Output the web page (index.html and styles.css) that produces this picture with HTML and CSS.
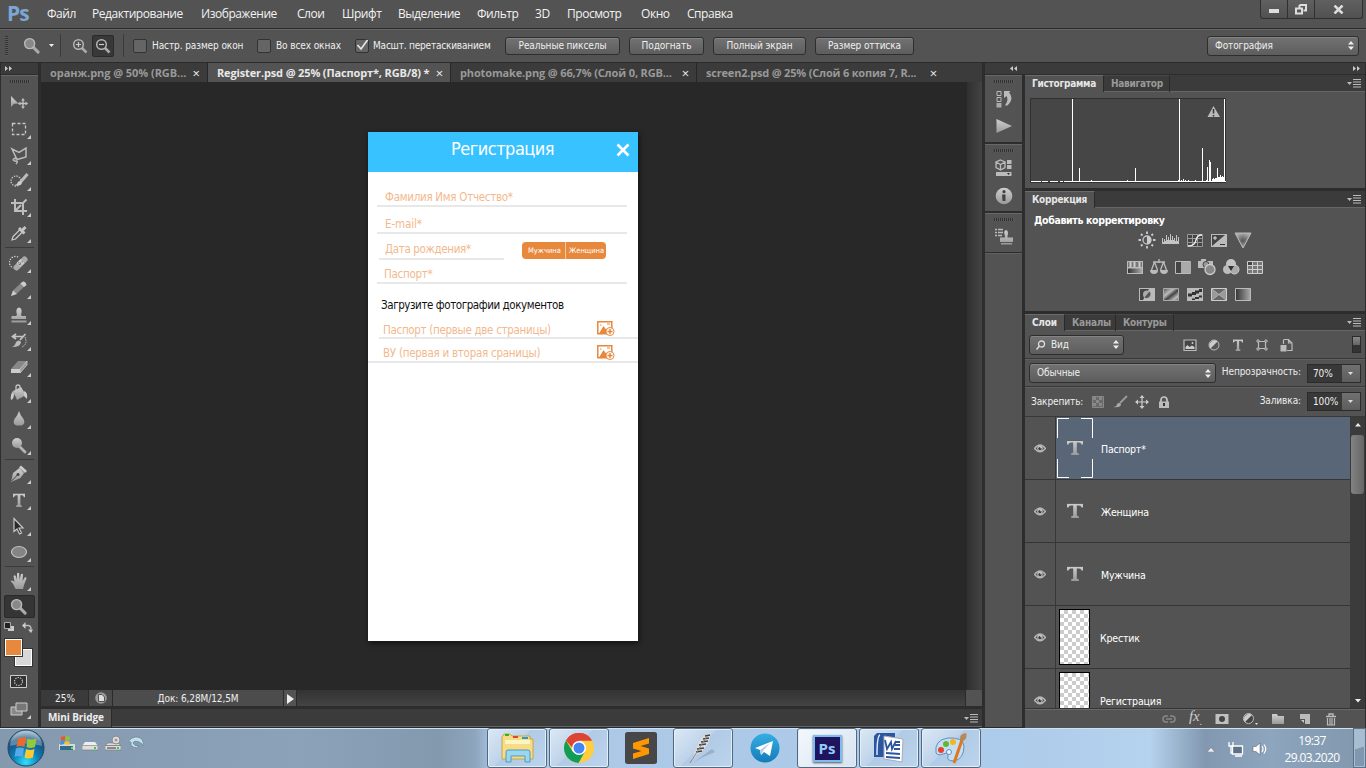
FILE: index.html
```html
<!DOCTYPE html>
<html lang="ru">
<head>
<meta charset="utf-8">
<title>Register.psd</title>
<link rel="stylesheet" href="styles.css">
</head>
<body>
<svg class="defs" width="0" height="0">
  <defs>
    <linearGradient id="metal" x1="0" y1="0" x2="0" y2="1"><stop offset="0" stop-color="#cfcfcf"/><stop offset="1" stop-color="#9a9a9a"/></linearGradient>
    <linearGradient id="fade" x1="0" y1="0" x2="1" y2="0"><stop offset="0" stop-color="#333"/><stop offset="1" stop-color="#aaa"/></linearGradient>
    <linearGradient id="diag" x1="0" y1="0" x2="1" y2="1"><stop offset="0" stop-color="#555"/><stop offset=".35" stop-color="#bbb"/><stop offset=".55" stop-color="#444"/><stop offset=".8" stop-color="#bbb"/><stop offset="1" stop-color="#666"/></linearGradient>
    <linearGradient id="tg" x1="0" y1="0" x2="0" y2="1"><stop offset="0" stop-color="#36aee2"/><stop offset="1" stop-color="#137cba"/></linearGradient>
    <radialGradient id="orb" cx=".5" cy=".9" r=".9"><stop offset="0" stop-color="#2fe0ff"/><stop offset=".4" stop-color="#0d7fb8"/><stop offset=".75" stop-color="#174f7c"/><stop offset="1" stop-color="#a9c4d8"/></radialGradient>
    <radialGradient id="dark"><stop offset="0" stop-color="#555"/><stop offset="1" stop-color="#aaa"/></radialGradient>
    <symbol id="menuic" viewBox="0 0 14 9"><path d="M0 3h5L2.500 6z" fill="#bbb"/><path d="M6 .5h8M6 3h8M6 5.500h8M6 8h8" stroke="#bbb"/></symbol>
    <symbol id="updown" viewBox="0 0 6 9"><path d="M0 3.500L3 0l3 3.500zM0 5.500h6L3 9z" fill="#eee"/></symbol>
    <symbol id="eye" viewBox="0 0 12 9"><path d="M.5 4.500Q6-2.500 11.500 4.500Q6 11 .5 4.500z" fill="#555" stroke="#b5b5b5" stroke-width="1.300"/><circle cx="6" cy="4.300" r="2.700" fill="#c4c4c4"/><circle cx="6" cy="4.600" r="1.700" fill="#383838"/><circle cx="7" cy="3.700" r=".8" fill="#ddd"/></symbol>
    <symbol id="tee" viewBox="0 0 16 15" preserveAspectRatio="none"><path d="M0 0h16v4.500h-1.500Q14 2.500 12 2.500H9.800V12q0 1.300 2 1.300V15H4.200v-1.700q2 0 2-1.300V2.500H4q-2 0-2.500 2H0z" fill="url(#metal)"/><path d="M0 .4h16" stroke="#333" stroke-width=".8"/></symbol>
    <symbol id="lens" viewBox="0 0 18 18"><path d="M10.500 10.500l5.500 5.500" stroke="#aaa" stroke-width="3.200" stroke-linecap="round"/><circle cx="7" cy="7" r="5.300" fill="#888" stroke="#b9b9b9" stroke-width="1.500"/></symbol>
    <symbol id="addpic" viewBox="0 0 18 15"><path d="M.8.8h14v12H.8z" fill="#fff" stroke="#e8883d" stroke-width="1.500"/><path d="M2 12.500L6.500 5l3 4 1.500-1.500V13z" fill="#e8883d"/><path d="M10 3h3M3 4h1.500" stroke="#e8883d" stroke-width="1.200"/><circle cx="13" cy="10.500" r="4" fill="#fff" stroke="#e8883d"/><path d="M13 8v5M10.500 10.500h5" stroke="#e8883d" stroke-width="1.500"/></symbol>
  </defs>
</svg>

<header class="menubar">
  <b class="pslogo">Ps</b>
  <nav class="menu"><span>Файл</span><span>Редактирование</span><span>Изображение</span><span>Слои</span><span>Шрифт</span><span>Выделение</span><span>Фильтр</span><span>3D</span><span>Просмотр</span><span>Окно</span><span>Справка</span></nav>
  <div class="winbtns">
    <span class="wb"><svg width="10" height="4"><path d="M0 0h10v4H0z" fill="#ddd"/></svg></span>
    <span class="wb"><svg width="12" height="11"><path d="M4.500 1h6.500v5.500H8.500M4.500 1v3" fill="none" stroke="#ddd" stroke-width="2"/><path d="M1 4.500h6v5H1z" fill="none" stroke="#ddd" stroke-width="2"/></svg></span>
    <span class="wb wide"><svg width="11" height="9"><path d="M1.500.5l8 8M9.500.5l-8 8" stroke="#ddd" stroke-width="2.500"/></svg></span>
  </div>
</header>

<section class="options">
  <i class="vgrip"></i>
  <svg class="opt-lens" width="17" height="17"><use href="#lens"/></svg>
  <svg class="opt-caret" width="5" height="3"><path d="M0 0h5L2.500 3z" fill="#eee"/></svg>
  <i class="vsep"></i>
  <span class="zoombtn"><svg width="16" height="16"><path d="M10 10l4.500 4.500" stroke="#aaa" stroke-width="2.500"/><circle cx="6.500" cy="6.500" r="4.800" fill="none" stroke="#b5b5b5" stroke-width="1.500"/><path d="M4 6.500h5M6.500 4v5" stroke="#ccc" stroke-width="1.200"/></svg></span>
  <span class="zoombtn on"><svg width="16" height="16"><path d="M10 10l4.500 4.500" stroke="#aaa" stroke-width="2.500"/><circle cx="6.500" cy="6.500" r="4.800" fill="none" stroke="#b5b5b5" stroke-width="1.500"/><path d="M4 6.500h5" stroke="#ccc" stroke-width="1.200"/></svg></span>
  <i class="vsep second"></i>
  <label class="check c1"><i></i>Настр. размер окон</label>
  <label class="check c2"><i></i>Во всех окнах</label>
  <label class="check c3"><i><svg width="14" height="13"><path d="M2.500 6l3.500 4L12.500 1" fill="none" stroke="#e5e5e5" stroke-width="1.700"/></svg></i>Масшт. перетаскиванием</label>
  <span class="btn b1">Реальные пикселы</span><span class="btn b2">Подогнать</span><span class="btn b3">Полный экран</span><span class="btn b4">Размер оттиска</span>
  <span class="select wsel">Фотография<svg width="6" height="9"><use href="#updown"/></svg></span>
</section>

<main class="work">
  <aside class="toolbox">
    <div class="strip"><svg width="8" height="5"><path d="M0 0l3 2.500L0 5zM4 0l3 2.500L4 5z" fill="#ccc"/></svg></div>
    <div class="tools">
      <i class="grip"></i>
      <span class="tool first"><svg width="20" height="20"><path d="M2 3v11l3-3.200 4.500-.3z" fill="url(#metal)"/><path d="M14 6v9M9.500 10.500h9" stroke="#c4c4c4" stroke-width="1.300"/><path d="M14 5l2 2.500h-4zM14 16l2-2.500h-4zM9 10.500l2.500-2v4zM19 10.500l-2.500-2v4z" fill="#bbb"/></svg></span>
      <span class="tool sub"><svg width="20" height="20"><path d="M3.500 4.500h13v11h-13z" fill="none" stroke="#c8c8c8" stroke-width="1.300" stroke-dasharray="3 2"/></svg></span>
      <span class="tool sub"><svg width="20" height="20"><path d="M3 4l7 3.500L17 3v9l-9 2.500zM8 14c-4-2-5 2-2 2s3 1 1 3" fill="none" stroke="#bbb" stroke-width="1.500"/></svg></span>
      <span class="tool sub"><svg width="20" height="20"><circle cx="7" cy="10" r="5" fill="none" stroke="#ccc" stroke-width="1.300" stroke-dasharray="1.300 1.300"/><path d="M18.500 3L12 10.500" stroke="#bbb" stroke-width="3"/><path d="M5 14q3 0 4-3 1.500-2 4 0 0 5-8 3z" fill="#ccc"/></svg></span>
      <span class="tool sub"><svg width="20" height="20"><path d="M6 2v12h12M2 6h12v12M14.500 5.500l3-3M7 13l5-5" fill="none" stroke="#bdbdbd" stroke-width="2"/></svg></span>
      <span class="tool sub"><svg width="20" height="20"><path d="M3 17l1-3.500 7-7 2.500 2.500-7 7z" fill="#555" stroke="#ccc" stroke-width="1.200"/><path d="M10 5l5.500 5.500M13 7.500L16.500 4" stroke="#c4c4c4" stroke-width="3"/></svg></span>
      <hr>
      <span class="tool sub"><svg width="20" height="20"><path d="M9 4a5 5 0 0 0-5 11" fill="none" stroke="#ddd" stroke-width="1.200" stroke-dasharray="1.200 1.400"/><path d="M7.500 14.500l8-8" stroke="#aaa" stroke-width="6" stroke-linecap="round"/><path d="M9.500 12l4-4" stroke="#ccc" stroke-width="5.500"/><path d="M10 11.800l3.500-3.500M9.500 9.500l3 3" stroke="#666" stroke-width="1.200" stroke-dasharray="1 1"/></svg></span>
      <span class="tool sub"><svg width="20" height="20"><path d="M2 17l2-5.500L13 3q3-1 4 3l-9 8.500z" fill="#888"/><path d="M2 17l2-5.500 4 3.500zM11.500 4.500L14 2.500q3 0 3.500 3.500L15 8z" fill="#ccc"/></svg></span>
      <span class="tool sub"><svg width="20" height="20"><path d="M8 10q-2-7 2-7.500Q14 3 12 10l1 1h4v3H2.500v-3H7zM2.500 15.500h15v2h-15z" fill="url(#metal)"/></svg></span>
      <span class="tool sub"><svg width="20" height="20"><path d="M4 5.500h10M7 3L3.500 5.500 7 8M11 9l5.500-6" fill="none" stroke="#c4c4c4" stroke-width="1.700"/><path d="M3 16q3-1 4-5 3-3 5 0 0 5-9 5z" fill="#bbb"/><path d="M16 6q3 7-3 10" fill="none" stroke="#ccc" stroke-dasharray="1.500 1"/></svg></span>
      <span class="tool sub"><svg width="20" height="20"><path d="M2 12l7-8h9l-7 8z" fill="#888"/><path d="M2 12h9v4H2z" fill="#ccc"/><path d="M11 12l7-8v4l-7 8z" fill="#999" stroke="#ccc" stroke-width=".8"/></svg></span>
      <span class="tool sub"><svg width="20" height="20"><path d="M4 8l8-4 5 8-9 5z" fill="url(#metal)"/><path d="M7 9V4q0-2 2-2t2 2v5" fill="none" stroke="#c4c4c4" stroke-width="1.300"/><path d="M4 8q-3 4-2 9 3-1 3-6zM15 8q4 1 3 8l-3-3z" fill="#ccc"/></svg></span>
      <span class="tool sub"><svg width="20" height="20"><path d="M10 2q1 4 4.500 8Q17 15 12.500 16.500h-5Q3 15 5.500 10 9 6 10 2z" fill="url(#metal)"/></svg></span>
      <span class="tool sub"><svg width="20" height="20"><path d="M9 10l7 7" stroke="#b5b5b5" stroke-width="2.800" stroke-linecap="round"/><circle cx="8" cy="8" r="5" fill="url(#metal)"/></svg></span>
      <hr>
      <span class="tool sub t-pen"><svg width="20" height="20"><path d="M2 18l2-9 6.500-5L15 9l-3.500 5z" fill="url(#metal)"/><path d="M2.500 17L9 10.500" stroke="#444"/><circle cx="9" cy="10.500" r="1.500" fill="#444"/><path d="M11 2.500L17 8" stroke="#ccc" stroke-width="3"/></svg></span>
      <span class="tool sub"><svg width="12" height="14"><use href="#tee" width="12" height="14"/></svg></span>
      <span class="tool sub"><svg width="20" height="20"><path d="M5 2.500v13l3-2.500 2.500 5 2-1-2.500-5h4z" fill="#2a2a2a" stroke="#c8c8c8" stroke-width="1.200"/></svg></span>
      <span class="tool sub"><svg width="20" height="20"><ellipse cx="10" cy="10" rx="7.500" ry="5.500" fill="#858585" stroke="#c4c4c4" stroke-width="1.200"/></svg></span>
      <hr>
      <span class="tool sub t-pen"><svg width="20" height="20"><path d="M6 17q-1-4-4.500-7 2-1.500 4 1L4.500 5q1.500-1.500 2.500.5L8 9V2.500q1.500-1.500 2.200 0L10.500 9 12 3q2-1 2 .8L13.500 10 16 6q1.800 0 1.500 1.500L15 14l-1 4H7z" fill="url(#metal)"/></svg></span>
      <span class="tool sel"><svg width="17" height="17"><use href="#lens"/></svg></span>
      <div class="swapline"><svg width="12" height="11"><path d="M4 4h6v5H4z" fill="#ccc"/><path d="M.5.5h6v6h-6z" fill="#222" stroke="#aaa"/></svg><svg width="11" height="11"><path d="M2 3.500h4q3 0 3 4" fill="none" stroke="#bbb" stroke-width="1.500"/><path d="M0 3.500L3.500 0v7zM9 11L6 7.500h5z" fill="#ccc"/></svg></div>
      <div class="swatches"><i class="bg"></i><i class="fg"></i></div>
      <svg class="qmask" width="17" height="13"><path d="M.5.5h16v12H.5z" fill="#333" stroke="#ccc"/><circle cx="8.500" cy="6.500" r="4" fill="none" stroke="#ccc" stroke-width="1.200" stroke-dasharray="1.300 1.200"/></svg>
      <span class="tool sub smode"><svg width="18" height="14"><path d="M1 5h11v8H1z" fill="#888" stroke="#ccc"/><path d="M6 1h11v8H6z" fill="#777" stroke="#ccc"/></svg></span>
    </div>
  </aside>

  <section class="docs">
    <div class="doctabs">
      <span class="dtab d1"><em>оранж.png @ 50% (RGB...</em><b>×</b></span>
      <span class="dtab d2 active"><em>Register.psd @ 25% (Паспорт*, RGB/8) *</em><b>×</b></span>
      <span class="dtab d3"><em>photomake.png @ 66,7% (Слой 0, RGB...</em><b>×</b></span>
      <span class="dtab d4"><em>screen2.psd @ 25% (Слой 6 копия 7, R...</em><b>×</b></span>
    </div>
    <div class="canvasrow">
      <div class="canvas">
        <article class="artboard">
          <div class="ahead"><h1>Регистрация</h1><svg width="14" height="14"><path d="M1.500 1.500l11 11M12.500 1.500l-11 11" stroke="#fff" stroke-width="2.600"/></svg></div>
          <div class="field f1"><span>Фамилия Имя Отчество*</span></div>
          <div class="field f2"><span>E-mail*</span></div>
          <div class="frow"><div class="field f3"><span>Дата рождения*</span></div><div class="gender"><span>Мужчина</span><span>Женщина</span></div></div>
          <div class="field f4"><span>Паспорт*</span></div>
          <p class="upload">Загрузите фотографии документов</p>
          <div class="field f5"><span>Паспорт (первые две страницы)</span><svg width="18" height="15"><use href="#addpic"/></svg></div>
          <div class="field f6"><span>ВУ (первая и вторая сраницы)</span><svg width="18" height="15"><use href="#addpic"/></svg></div>
        </article>
      </div>
      <i class="vscroll"></i>
    </div>
    <div class="status">
      <span class="pct">25%</span>
      <span class="sicon"><svg width="12" height="12"><circle cx="6" cy="6" r="5.800" fill="#999"/><path d="M3.500 2.500H7l2.500 2.500v4.500h-6z" fill="#ddd" stroke="#555"/></svg></span>
      <span class="info">Док: 6,28M/12,5M</span>
      <span class="play"><svg width="7" height="10"><path d="M0 0l7 5-7 5z" fill="#eee"/></svg></span>
      <i class="hscroll"></i><i class="corner"></i>
    </div>
    <div class="bridge"><span>Mini Bridge</span><svg width="14" height="9"><use href="#menuic"/></svg></div>
  </section>

  <aside class="iconcol">
    <div class="strip"><svg width="8" height="5"><path d="M3 0L0 2.500 3 5zM7 0L4 2.500 7 5z" fill="#ccc"/></svg></div>
    <div class="igroup"><i class="grip"></i>
      <svg width="18" height="20"><path d="M2 2.500h4v4H2zM2 8.500h4v4H2z" fill="none" stroke="#bbb"/><path d="M1.500 14h5v4.500h-5z" fill="#aaa"/><path d="M9 2h6.500L14 3.500q5.500 6-1.500 13H10q4-5 1.500-9.500L9 9z" fill="#bbb"/></svg>
      <svg width="18" height="16"><path d="M1.500 1l15.500 7-15.500 7z" fill="url(#metal)"/></svg></div>
    <div class="igroup"><i class="grip"></i>
      <svg width="18" height="20"><path d="M5.500 2L10 4v5.500L5.500 12 1 9.500V4zM1 4l4.500 2.500L10 4M5.500 6.500V12" fill="#555" stroke="#bbb" stroke-width="1.300"/><path d="M12 2h4.500v4H12zM12 7h4.500v4H12zM1 14h15.500v4H1z" fill="#bbb"/><path d="M12 15h3l-1.500 2z" fill="#333"/></svg>
      <svg width="18" height="18"><circle cx="9" cy="9" r="8.300" fill="url(#metal)"/><circle cx="9" cy="4.700" r="1.600" fill="#444"/><path d="M7 7.500h3.500V14h-3z" fill="#444"/></svg></div>
    <div class="igroup last"><i class="grip"></i>
      <svg width="20" height="20"><path d="M1 2.500h2M1 5.500h2M1 8.500h2M4 2.500h5M4 5.500h5M4 8.500h4" stroke="#bbb" stroke-width="1.300"/><path d="M11 9q-2-5 1-6 3 1 1.500 6v1.500H19V15H6v-4.500h5zM7 16h11v1.500H7z" fill="url(#metal)"/></svg></div>
    <div class="irest"></div>
  </aside>

  <aside class="panels">
    <div class="strip right"><svg width="8" height="5"><path d="M0 0l3 2.500L0 5zM4 0l3 2.500L4 5z" fill="#ccc"/></svg></div>

    <section class="panel hist">
      <div class="ptabs"><span class="on w1">Гистограмма</span><span class="w2">Навигатор</span><svg width="14" height="9"><use href="#menuic"/></svg></div>
      <svg class="histo" width="196" height="85"><path d="M.5.5h195v84H.5z" fill="#464646" stroke="#303030"/><path d="M1 83.500h10m1 0h6m2 0h8m2 0h3m1 0h162M42.500 1v83M49.500 70v14M61.500 82v2M97.500 82v2M105.500 70v14M149.500 1v83M148.500 82v2M151.500 82v2M153.500 81v3M155.500 82v2M158.500 82v2M165.500 82v2M172.500 50v34M176.500 82v2M177.500 69v15M179.500 62v22M180.500 64v20M182.500 81v3M183.500 80v4M184.500 81v3M185.500 80v4M186.500 80v4M187.500 70v14M188.500 79v5M189.500 79v5M190.500 77v7M191.500 79v5M192.500 78v6M193.500 79v5M194.500 1v83" stroke="#fff"/><path d="M183.500 8l6.500 11h-12.500z" fill="#bbb"/><path d="M183.500 11v4.500M183.500 17v1.500" stroke="#333" stroke-width="1.500"/></svg>
    </section>

    <section class="panel adj">
      <div class="ptabs"><span class="on w3">Коррекция</span><svg width="14" height="9"><use href="#menuic"/></svg></div>
      <b class="addcorr">Добавить корректировку</b>
      <div class="arow">
        <svg width="18" height="18"><circle cx="9" cy="9" r="4" fill="#555" stroke="#c4c4c4" stroke-width="1.300"/><path d="M9 5a4 4 0 0 1 0 8z" fill="#ccc"/><path d="M9 .5v2.500M9 15v2.500M.5 9h2.500M15 9h2.500M3 3l1.500 1.500M13.500 13.500L15 15M15 3l-1.500 1.500M3 15l1.500-1.500" stroke="#ccc" stroke-width="1.800"/></svg>
        <svg width="18" height="18"><path d="M0 13V7h1v4h1V8h1v2h1V4h1v5h1V6h1v3h1V3h1v6h1V5h1v4h1V7h1v3h1V4h1v6h1V6h1v7z" fill="#c4c4c4"/></svg>
        <svg width="18" height="18"><path d="M1.500 3.500h15v12h-15zM6.500 3v13M11.500 3v13M1 7.500h16M1 11.500h16" fill="#444" stroke="#999"/><path d="M2 15q7 0 8-6 1-5 6-5" fill="none" stroke="#eee" stroke-width="1.400"/></svg>
        <svg width="18" height="18"><path d="M1 3h16v13H1z" fill="#bbb"/><path d="M2 15V4h13z" fill="#444"/><path d="M3 7h4M5 5v4" stroke="#ddd"/><path d="M10 13.500h5" stroke="#333"/></svg>
        <svg width="18" height="18"><path d="M1 2h16L9 17z" fill="url(#dark)" stroke="#bbb"/></svg>
      </div>
      <div class="arow r2">
        <svg width="18" height="18"><path d="M1 3h16v13H1z" fill="#bbb"/><path d="M2 4h14v5H2z" fill="#777"/><path d="M4.500 4v5M8.500 4v5M13.500 4v5" stroke="#ccc" stroke-width="2"/><path d="M2 10.500h14V15H2z" fill="url(#fade)"/></svg>
        <svg width="18" height="18"><path d="M3 4h12M9 1v4M4.500 4L1.500 12M4.500 4l3 8M13.500 4l-3 8M13.500 4l3 8" fill="none" stroke="#bbb" stroke-width="1.300"/><path d="M0 12h8q0 4-4 4t-4-4zM10 12h8q0 4-4 4t-4-4z" fill="#bbb"/></svg>
        <svg width="18" height="18"><path d="M1.500 3.500h15v12h-15z" fill="#444" stroke="#bbb"/><path d="M7 4h10v11H7z" fill="#aaa"/></svg>
        <svg width="18" height="18"><path d="M0 3h3V1h5v2h7v7H0z" fill="#bbb"/><circle cx="8" cy="6.500" r="3" fill="#999" stroke="#444"/><circle cx="12" cy="11.500" r="5" fill="#888" stroke="#ccc" stroke-width="1.300"/></svg>
        <svg width="18" height="18"><circle cx="9" cy="6" r="5" fill="#c4c4c4"/><circle cx="5.500" cy="11.500" r="4.500" fill="#bbb"/><circle cx="12.500" cy="11.500" r="4.500" fill="#aaa" stroke="#ccc"/><path d="M6 8h6l-3 5z" fill="#333"/></svg>
        <svg width="18" height="18"><path d="M1.500 3.500h15v12h-15z" fill="#777" stroke="#ccc"/><path d="M6.500 3v13M11.500 3v13M1 7.500h16M1 11.500h16" stroke="#ccc"/><path d="M2 4h4v3H2z" fill="#444"/></svg>
      </div>
      <div class="arow r3">
        <svg width="18" height="18"><path d="M1 3h16v13H1z" fill="#bbb"/><path d="M2 4h9L5 15H2z" fill="#444"/><circle cx="9" cy="9.500" r="4" fill="#aaa"/><path d="M6.500 12.500l5-6a4 4 0 0 1-5 6z" fill="#555"/></svg>
        <svg width="18" height="18"><path d="M1.500 3.500h15v12h-15z" fill="url(#diag)" stroke="#aaa"/></svg>
        <svg width="18" height="18"><path d="M1 3h16v13H1z" fill="#bbb"/><path d="M2 8.500h4V7h3V5.500h4V4h3v3h-3v1.500h-3V10H6v1.500H2zM6 13.500h3V12h4v-1.500h3v2h-3V14H9v1H6z" fill="#333"/></svg>
        <svg width="18" height="18"><path d="M1.500 3.500h15v12h-15z" fill="#999" stroke="#ccc"/><path d="M2 4l7 6 7-6zM2 15l7-6 7 6z" fill="#666"/><path d="M2 4l14 11M16 4L2 15" stroke="#ccc" stroke-width=".7"/></svg>
        <svg width="18" height="18"><path d="M1.500 3.500h15v12h-15z" fill="url(#fade)" stroke="#bbb"/></svg>
      </div>
    </section>

    <section class="panel layers">
      <div class="ptabs"><span class="on w4">Слои</span><span class="w5">Каналы</span><span class="w6">Контуры</span><svg width="14" height="9"><use href="#menuic"/></svg></div>
      <div class="lrow filter">
        <span class="select kind"><svg width="10" height="10"><circle cx="5.500" cy="4" r="3" fill="none" stroke="#ddd" stroke-width="1.300"/><path d="M3.500 6L.5 9.500" stroke="#ddd" stroke-width="1.500"/></svg><em>Вид</em><svg width="6" height="9"><use href="#updown"/></svg></span>
        <div class="ficons">
          <svg width="14" height="14"><path d="M1 2h12v10.500H1z" fill="#444" stroke="#bbb" stroke-width="1.200"/><path d="M2.500 11V9l2-2 2 2 2.500-1.500L11.500 9v2z" fill="#ccc"/><circle cx="9.500" cy="5" r="1" fill="#ccc"/></svg>
          <svg width="14" height="14"><circle cx="7" cy="7" r="5" fill="#555" stroke="#bbb"/><path d="M3.500 10.500a5 5 0 0 1 7-7z" fill="#ccc"/></svg>
          <svg width="10" height="12" class="ft"><use href="#tee" width="10" height="12"/></svg>
          <svg width="14" height="14"><path d="M3.500 3.500h7v7h-7z" fill="none" stroke="#bbb" stroke-width="1.200"/><path d="M2 2h2v2H2zM10 2h2v2h-2zM2 10h2v2H2zM10 10h2v2h-2z" fill="#444" stroke="#bbb"/></svg>
          <svg width="14" height="14"><path d="M5 1.500h4.500L13 5v7.500H8M4.500 6V1.500M9.500 1.500V5H13" fill="none" stroke="#bbb" stroke-width="1.200"/><path d="M1.500 7h6v6.500h-6z" fill="#bbb"/></svg>
        </div>
        <i class="toggle"></i>
      </div>
      <div class="lrow blend"><span class="select mode">Обычные<svg width="6" height="9"><use href="#updown"/></svg></span><span class="lbl">Непрозрачность:</span><span class="num">70%<i><svg width="5" height="3"><path d="M0 0h5L2.500 3z" fill="#ddd"/></svg></i></span></div>
      <div class="lrow lock"><span class="lbl2">Закрепить:</span>
        <svg class="k1" width="12" height="12"><path d="M.5.500h11v11H.5z" fill="#6a6a6a" stroke="#888"/><path d="M1 1h3v3H1zM7 1h3v3H7zM4 4h3v3H4zM1 7h3v3H1zM7 7h3v3H7z" fill="#888"/></svg>
        <svg class="k2" width="16" height="14"><path d="M15 1L8 8" stroke="#999" stroke-width="2"/><path d="M1 12q4 0 4-3 2-2 4 0 0 4-8 3z" fill="#aaa"/></svg>
        <svg class="k3" width="14" height="14"><path d="M7 2v10M2 7h10" stroke="#ccc" stroke-width="1.200"/><path d="M7 0l2.500 3h-5zM7 14l2.500-3h-5zM0 7l3-2.500v5zM14 7l-3-2.500v5z" fill="#ccc"/></svg>
        <svg class="k4" width="12" height="13"><path d="M3 6V4q0-3 3-3t3 3v2" fill="none" stroke="#c4c4c4" stroke-width="1.700"/><path d="M1 5.500h10V12H1z" fill="#bbb"/><path d="M6 7v3" stroke="#333" stroke-width="2"/></svg>
        <span class="lbl">Заливка:</span><span class="num">100%<i><svg width="5" height="3"><path d="M0 0h5L2.500 3z" fill="#ddd"/></svg></i></span></div>
      <div class="lbody">
        <div class="llist">
          <div class="layer cur"><span class="eye"><svg width="12" height="9"><use href="#eye"/></svg></span><span class="thumb"><svg width="36" height="60"><path d="M12 .5H.5V20M24 .5h11.500V20M12 59.500H.5V41M24 59.500h11.500V41" fill="none" stroke="#fff"/><use href="#tee" x="10" y="22" width="16" height="15"/></svg></span><span class="lname">Паспорт*</span></div>
          <div class="layer"><span class="eye"><svg width="12" height="9"><use href="#eye"/></svg></span><span class="thumb"><svg width="36" height="60"><use href="#tee" x="10" y="22" width="16" height="15"/></svg></span><span class="lname">Женщина</span></div>
          <div class="layer"><span class="eye"><svg width="12" height="9"><use href="#eye"/></svg></span><span class="thumb"><svg width="36" height="60"><use href="#tee" x="10" y="22" width="16" height="15"/></svg></span><span class="lname">Мужчина</span></div>
          <div class="layer"><span class="eye"><svg width="12" height="9"><use href="#eye"/></svg></span><span class="thumb"><i></i></span><span class="lname px">Крестик</span></div>
          <div class="layer"><span class="eye"><svg width="12" height="9"><use href="#eye"/></svg></span><span class="thumb"><i></i></span><span class="lname px">Регистрация</span></div>
        </div>
        <div class="lscroll"><svg width="6" height="4"><path d="M0 3.500h6L3 0z" fill="#eee"/></svg><i></i><svg width="6" height="4"><path d="M0 0h6L3 3.500z" fill="#eee"/></svg></div>
      </div>
      <div class="lfoot">
        <svg width="14" height="12"><path d="M6 3H4q-3 0-3 3t3 3h2M8 3h2q3 0 3 3t-3 3H8M4 6h6" fill="none" stroke="#888" stroke-width="1.500"/></svg>
        <span class="fx">fx<sub>.</sub></span>
        <svg width="14" height="12"><path d="M.5 1h13v10H.5z" fill="#c0c0c0"/><circle cx="7" cy="6" r="3" fill="#444"/></svg>
        <svg width="16" height="14"><circle cx="6.500" cy="6.500" r="5" fill="#444" stroke="#bbb"/><path d="M3 10a5 5 0 0 1 7-7z" fill="#ccc"/><path d="M13 11h3l-1.500 2z" fill="#ddd"/></svg>
        <svg width="14" height="12"><path d="M1 1h5l1 2h6v8H1z" fill="url(#metal)"/></svg>
        <svg width="14" height="12"><path d="M2 1h10v10H7V6H2z" fill="#bbb"/><path d="M3 7h3v3z" fill="#ccc"/></svg>
        <svg width="12" height="13"><path d="M1 3.500h10M4 3V1h4v2" fill="none" stroke="#bbb" stroke-width="1.300"/><path d="M2.500 5v7h7V5M5 5v7M7 5v7" fill="none" stroke="#bbb" stroke-width="1.200"/></svg>
      </div>
    </section>
  </aside>
</main>

<footer class="taskbar">
  <svg class="orb" width="38" height="38"><circle cx="19" cy="19" r="18" fill="url(#orb)" stroke="#24475f"/><path d="M3 17a16 15 0 0 1 32 0q-16-5-32 0z" fill="#fff" opacity=".3"/><path d="M11 10q4-3 8-1l-1.500 9q-4-2-8 0z" fill="#ee6a2b"/><path d="M20.500 9.500q4 2 9 0L28 18q-5 2-8.500 0z" fill="#94c83d"/><path d="M9 19.500q4-2 8 0L15.500 28q-4-2-8 0z" fill="#54a9e8"/><path d="M19 20q4 2 8.500 0L26 28.500q-5 2-8.500 0z" fill="#fcc92e"/></svg>
  <div class="quick">
    <svg width="16" height="17"><path d="M0 9h16v6H0z" fill="#d4dadd"/><path d="M1 11h13v4H1z" fill="#326d88"/><path d="M2 2l4-1v4l-4 1z" fill="#ea572b"/><path d="M7 1l4 1-1 4-4-1z" fill="#8cc63e"/><path d="M2 6l4-1v4l-5 1z" fill="#3e96e0"/><path d="M6 6l5 1-1 3-5-1z" fill="#fbc02d"/><path d="M12 12h2v2h-2z" fill="#5bea47"/></svg>
    <svg width="16" height="17"><path d="M3 7h10l3 4H0z" fill="#eee"/><path d="M0 10.500h16V15H0z" fill="#ddd" stroke="#777" stroke-width=".6"/><path d="M12 12h2v2h-2z" fill="#3c3"/></svg>
    <svg width="16" height="17"><path d="M0 10.500h16V15H0zM3 8h10l3 2.500H0z" fill="#ddd" stroke="#777" stroke-width=".6"/><circle cx="11" cy="5" r="4" fill="#ddd" stroke="#888"/><circle cx="11" cy="5" r="1.500" fill="#999"/><path d="M2 13h9" stroke="#333"/><path d="M12 12h2v2h-2z" fill="#3c3"/></svg>
    <svg width="16" height="17"><path d="M.5 6Q7-1 14 4q2 4 1 7-1-3-4-4Q6 5 5 8q1 3 6 3-2 3-6 1-3-2-2-5-2 0-2.500-1z" fill="#c9dfe8" stroke="#60899e" stroke-width=".8"/></svg>
  </div>
  <div class="apps">
    <span class="app open"><svg width="34" height="32"><path d="M2 5l2-3h6l2 2h18v3H33v20H2z" fill="#f5dc85" stroke="#c9a640"/><path d="M5 8h25v4H5z" fill="#fdf4c4"/><path d="M5 2h4v2H5z" fill="#2b2"/><path d="M13 4h5v2h-5z" fill="#d43"/><path d="M22 5h6v2h-6z" fill="#29d"/><path d="M6 30V20q0-2 2-2h20q2 0 2 2v10h-5v-6H11v6z" fill="#9bd5ee" stroke="#4a9cc4"/></svg></span>
    <span class="app open"><svg width="30" height="30"><circle cx="15" cy="15" r="15" fill="#ffcd40"/><path d="M15 15L2 7.500A15 15 0 0 1 28 7.500H15z" fill="#db4437"/><path d="M2 7.500A15 15 0 0 0 14.500 30l6.500-11.500-12.500 0z" fill="#0f9d58"/><path d="M15 0A15 15 0 0 1 28 7.500H15L8.500 15 2 7.500A15 15 0 0 1 15 0z" fill="#db4437"/><circle cx="15" cy="15" r="7" fill="#fff"/><circle cx="15" cy="15" r="5.500" fill="#4285f4"/></svg></span>
    <span class="app"><svg width="32" height="32"><rect width="32" height="32" rx="2.500" fill="#474747"/><path d="M8 11l16-5v5.500L15.500 14 24 16.500v5.500L8 27v-5.500L16.500 19 8 16.500z" fill="#ff9800"/></svg></span>
    <span class="app open"><svg width="32" height="32"><path d="M7 30l18-13 3 3-12 5z" fill="#7b91a8" opacity=".5"/><path d="M3 31Q6 25 8 19l4-9Q18 1 23 1q1 6-3 12l-6 8-4 1z" fill="#ddd"/><path d="M9 20l6-1M10 17l7-1M12 13l7-1M14 10l7-1M16 7l6-1M18 4l5-1" stroke="#444" stroke-width="1.500"/><path d="M3 31L20 4" stroke="#888"/></svg></span>
    <span class="app"><svg width="30" height="30"><circle cx="15" cy="15" r="14.500" fill="url(#tg)"/><path d="M5 15l18-7-3 15-6-4-3 3-1-5z" fill="#fff"/><path d="M10 17l10-7-7 8-2 4z" fill="#b5cfe4"/></svg></span>
    <span class="app open bright"><i class="psicon">Ps</i></span>
    <span class="app open"><svg width="32" height="32"><path d="M4 1h18v24H1V4z" fill="#2b569f"/><path d="M7 3q-3 1-3 20" fill="none" stroke="#dceaff" stroke-width="1.500"/><path d="M11 4l19 3-1 23-18-3z" fill="#fff" stroke="#aab"/><path d="M12 8l2 9 4-7 1 7 4-8" fill="none" stroke="#2b569f" stroke-width="1.800"/><path d="M23 10h4M22 13h5M21 17h6M13 21l14 1M13 25l14 1" stroke="#2b569f" stroke-width="1.800"/></svg></span>
    <span class="app open"><svg width="34" height="32"><path d="M2 21Q0 8 14 6q15-1 16 8 0 13-10 15-8 0-6-5 0-4-5-2-5 2-7-1z" fill="#c4def3" stroke="#5f91bd"/><circle cx="7" cy="18" r="3" fill="#e8422c"/><circle cx="12" cy="12" r="3" fill="#61b82f"/><circle cx="19" cy="10" r="3" fill="#f7b51d"/><circle cx="15" cy="20" r="2.500" fill="#edf5fb" stroke="#5f91bd"/><path d="M28 8l-8 23" stroke="#e0761d" stroke-width="3"/><path d="M26 8q-1-6 6-7 2 5-3 8z" fill="#b48a58"/></svg></span>
  </div>
  <div class="tray">
    <svg class="up" width="8" height="5"><path d="M0 5h8L4 .5z" fill="#eee" stroke="#555" stroke-width=".4"/></svg>
    <svg width="16" height="16"><path d="M4.500 5h10v8h-10z" fill="#5f7186" stroke="#fff" stroke-width="1.300"/><path d="M7 15h7" stroke="#fff" stroke-width="1.500"/><path d="M1 1v4h4V1M3 5v7h2" fill="none" stroke="#fff" stroke-width="1.300"/></svg>
    <svg class="snd" width="16" height="16"><path d="M1 5.500h3L8 2v12l-4-3.500H1z" fill="#fff" stroke="#555" stroke-width=".5"/><path d="M10 5q2 3 0 6M12 3.500q3.500 4.500 0 9" fill="none" stroke="#fff" stroke-width="1.200"/></svg>
  </div>
  <div class="clock"><span>19:37</span><span>29.03.2020</span></div>
  <i class="peek"></i>
</footer>
</body>
</html>
```

FILE: styles.css
```css
* { box-sizing: border-box; }
body { margin: 0; width: 1366px; height: 768px; overflow: hidden; display: flex; flex-direction: column; background: #282828; color: #eee; font: 10.5px/14px "DejaVu Sans Condensed", "Noto Sans", sans-serif; }
i, em { font-style: normal; display: block; }
svg { display: block; flex: none; }
.defs { position: absolute; }
span, div { white-space: nowrap; }

/* menu and options bars */
.menubar { height: 28px; flex: none; display: flex; background: #535353; }
.pslogo { width: 47px; padding-left: 7px; font: bold 21px/27px "Open Sans", sans-serif; letter-spacing: -1px; color: #7ba7d7; }
.menu { display: grid; grid-template-columns: 45px 109px 96px 45px 56px 79px 58px 32px 74px 46px 80px; font: 12px/28px "Open Sans", "Noto Sans", sans-serif; letter-spacing: -.45px; color: #f2f2f2; }
.winbtns { margin-left: auto; margin-right: 3px; height: 19px; display: flex; border: 1px solid #303030; border-top: 0; border-radius: 0 0 3px 3px; background: linear-gradient(#606060, #515151); }
.wb { width: 27px; display: flex; justify-content: center; align-items: center; border-right: 1px solid #303030; }
.wb:first-child { padding-top: 4px; }
.wb.wide { width: 47px; border: 0; }
.options { height: 35px; flex: none; display: flex; align-items: center; background: #535353; border-top: 1px solid #2b2b2b; border-bottom: 1px solid #2b2b2b; box-shadow: inset 0 1px #666; padding: 0 7px 0 5px; font-size: 10px; letter-spacing: -.1px; }
.vgrip { width: 3px; height: 20px; background: repeating-linear-gradient(#333 0 1px, #5c5c5c 1px 2px); }
.opt-lens { margin-left: 15px; }
.opt-caret { margin-left: 9px; }
.vsep { width: 1px; height: 23px; background: #3b3b3b; margin-left: 6px; }
.vsep.second { margin-left: 9px; margin-right: 9px; }
.zoombtn { width: 22px; height: 22px; margin-left: 8px; display: flex; align-items: center; justify-content: center; }
.zoombtn.on { background: #383838; border: 1px solid #2a2a2a; border-radius: 2px; margin-left: 1px; }
.check { display: flex; align-items: center; gap: 5px; }
.check i { width: 14px; height: 14px; background: #656565; border: 1px solid #333; border-radius: 2px; }
.c1 { width: 124px; } .c2 { width: 98px; } .c3 { width: 150px; gap: 4px; letter-spacing: -.2px; }
.c3 i svg { margin: -1px; overflow: visible; }
.btn, .select { border: 1px solid #2e2e2e; border-radius: 3px; background: linear-gradient(#727272, #5d5d5d); box-shadow: inset 0 1px #838383; }
.btn { height: 18px; line-height: 15px; text-align: center; margin-right: 9px; }
.b1 { width: 115px; } .b2 { width: 75px; } .b3 { width: 93px; } .b4 { width: 99px; }
.select { display: flex; align-items: center; justify-content: space-between; height: 20px; padding: 0 4px 0 7px; }
.wsel { width: 152px; margin-left: auto; font-size: 10px; }

/* workspace columns */
.work { height: 665px; flex: none; display: flex; background: #2d2d2d; border-bottom: 1px solid #2a2a2a; }
.strip { height: 11px; flex: none; margin-bottom: 1px; background: #3b3b3b; padding: 3px 4px; }
.grip { width: 20px; height: 3px; background: repeating-linear-gradient(90deg, #303030 0 1px, #5b5b5b 1px 2px); }
.toolbox { width: 37px; margin-left: 1px; margin-right: 3px; display: flex; flex-direction: column; }
.tools { flex: 1; background: #535353; border-top: 1px solid #686868; display: flex; flex-direction: column; align-items: center; }
.tools .grip { margin-top: 4px; margin-bottom: 7px; flex: none; }
.tool { width: 31px; height: 26px; flex: none; display: flex; align-items: center; justify-content: center; position: relative; }
.tool > svg { margin-right: 2px; }
.sub::after { content: ""; position: absolute; right: 4px; bottom: 3px; border: 2px solid transparent; border-right-color: #ccc; border-bottom-color: #ccc; }
.tools hr { width: 29px; height: 1px; border: 0; background: #3a3a3a; margin: 1px 0 2px; flex: none; }
.t-pen { margin-top: -1px; }
.tool.sel { height: 23px; margin: 1px 0 4px; background: #353535; border: 1px solid #2a2a2a; border-radius: 2px; }
.swapline { display: flex; gap: 6px; width: 31px; height: 16px; }
.swatches { width: 29px; height: 29px; flex: none; position: relative; margin: 0 2px 0 0; }
.swatches i { position: absolute; width: 19px; height: 19px; border: 1px solid #333; box-shadow: inset 0 0 0 1px #fff; }
.fg { left: 0; top: 0; background: #e8883d; }
.bg { right: 0; bottom: 0; background: #d8d8d8; }
.qmask { margin: 8px 2px 8px 0; }

/* document area */
.docs { width: 941px; margin-right: 3px; display: flex; flex-direction: column; }
.doctabs { height: 19px; flex: none; display: flex; background: #3b3b3b; }
.dtab { display: flex; align-items: center; justify-content: space-between; padding: 0 7px 0 9px; border-right: 1px solid #272727; color: #999; font-weight: bold; font-family: "Open Sans", sans-serif; font-size: 11px; letter-spacing: -.14px; }
.dtab b { font-size: 13px; font-weight: normal; color: #eee; }
.dtab.active { background: #535353; color: #e8e8e8; }
.d1 { width: 167px; letter-spacing: -.05px; } .d2 { width: 243px; } .d3 { width: 246px; } .d4 { width: 247px; border: 0; letter-spacing: -.19px; }
.canvasrow { height: 608px; flex: none; display: flex; }
.canvas { flex: 1; background: #282828; padding: 50px 0 0 327px; }
.vscroll { width: 15px; background: linear-gradient(90deg, #303030, #434343); }
.artboard { width: 270px; height: 509px; background: #fff; box-shadow: 1px 2px 5px #111; font-family: "DejaVu Sans Condensed", sans-serif; }
.ahead { height: 40px; background: #38c2ff; display: flex; justify-content: flex-end; padding: 11px 8px 0 0; }
.ahead h1 { width: 104px; margin: -6px 61px 0 0; font: 18px/24px "DejaVu Sans Condensed", sans-serif; letter-spacing: -.5px; color: #fff; white-space: nowrap; }
.field { display: flex; justify-content: space-between; align-items: flex-end; border-bottom: 2px solid #e8e8e8; color: #f2b98e; font-size: 11.5px; line-height: 14px; letter-spacing: -.28px; }
.f1 { height: 35px; margin-left: 9px; width: 250px; padding: 0 0 1px 8px; }
.f2 { height: 27px; margin-left: 9px; width: 250px; padding: 0 0 1px 8px; letter-spacing: -.1px; }
.frow { display: flex; height: 26px; justify-content: space-between; padding-right: 32px; }
.f3 { margin-left: 11px; width: 125px; padding: 0 0 2px 6px; letter-spacing: -.35px; }
.gender { display: flex; width: 84px; height: 17px; margin-top: 8px; border-radius: 4px; background: #e8883d; font-size: 7.5px; line-height: 17px; color: #fff; }
.gender span { width: 44px; padding-left: 6px; border-right: 1px solid #f6c9a5; }
.gender span + span { border: 0; padding-left: 3px; width: 40px; }
.f4 { height: 24px; margin-left: 9px; width: 250px; padding: 0 0 1px 7px; }
.upload { margin: 14px 0 0 13px; font-size: 11.5px; line-height: 14px; letter-spacing: -.42px; color: #111; white-space: nowrap; }
.f5 { height: 27px; margin-left: 11px; padding: 0 23px 0 4px; letter-spacing: -.31px; }
.f5 svg, .f6 svg { margin-bottom: 1px; }
.f6 { height: 24px; padding: 0 23px 1px 15px; letter-spacing: -.26px; }
.f6 svg { margin-bottom: 0; }
.status { height: 16px; flex: none; display: flex; background: #2b2b2b; gap: 1px; line-height: 17px; font-size: 10px; }
.pct { width: 47px; background: #3a3a3a; padding-left: 14px; }
.sicon { width: 23px; background: #4a4a4a; display: flex; align-items: center; justify-content: center; }
.info { width: 170px; background: #4c4c4c; text-align: center; letter-spacing: -.1px; }
.play { width: 12px; background: #535353; padding: 4px 0 0 3px; }
.hscroll { flex: 1; background: linear-gradient(#333, #444); }
.corner { width: 16px; background: #535353; }
.bridge { height: 18px; margin-top: 3px; background: #3b3b3b; display: flex; justify-content: space-between; padding-right: 4px; border-bottom: 1px solid #666; font: bold 10px/17px "Open Sans", sans-serif; letter-spacing: -.1px; }
.bridge span { width: 71px; padding-left: 7px; background: #535353; border-right: 1px solid #2a2a2a; height: 18px; }
.bridge svg { margin-top: 5px; }

/* collapsed panel icons */
.iconcol { width: 37px; margin-right: 3px; display: flex; flex-direction: column; }
.iconcol .strip { padding-left: 25px; }
.igroup { height: 67px; flex: none; margin-bottom: 2px; padding-top: 4px; display: flex; flex-direction: column; align-items: center; background: #535353; border-top: 1px solid #686868; }
.igroup svg { margin-top: 6px; }
.igroup svg + svg { margin-top: 9px; }
.igroup.last { height: 39px; margin-bottom: 1px; }
.irest { flex: 1; background: #535353; border-top: 1px solid #606060; }

/* right panels */
.panels { width: 340px; display: flex; flex-direction: column; }
.strip.right { display: flex; justify-content: flex-end; margin-left: -3px; }
.panel { background: #535353; flex: none; margin-bottom: 3px; overflow: hidden; }
.hist { height: 113px; } .adj { height: 120px; } .layers { height: 414px; margin: 0; }
.ptabs { height: 17px; display: flex; background: #3b3b3b; border-bottom: 1px solid #666; font: bold 10px/16px "DejaVu Sans Condensed", sans-serif; letter-spacing: -.25px; color: #999; }
.ptabs span { padding-left: 7px; height: 17px; border-right: 1px solid #2a2a2a; border-top: 1px solid #484848; }
.ptabs .on { background: #535353; color: #e6e6e6; border-top-color: #6b6b6b; }
.ptabs svg { margin: 4px 4px 0 auto; }
.w1 { width: 79px; } .w2 { width: 66px; } .w3 { width: 70px; } .w4 { width: 40px; } .w5 { width: 51px; } .w6 { width: 58px; }
.histo { margin: 6px 0 0 5px; }
.addcorr { display: block; margin: 5px 0 0 9px; font-size: 10.5px; letter-spacing: -.35px; line-height: 14px; color: #fff; }
.arow { display: flex; justify-content: center; gap: 6px; margin-top: 4px; height: 18px; }
.r2, .r3 { margin-top: 9px; }
.lrow { display: flex; align-items: center; border-top: 1px solid #606060; border-bottom: 1px solid #383838; height: 28px; padding: 0 5px 0 4px; font-size: 10px; letter-spacing: -.1px; }
.layers .filter { border-top: 0; }
.kind { width: 95px; gap: 5px; padding-left: 6px; }
.kind em { flex: 1; }
.ficons { margin-left: 59px; display: flex; gap: 10px; align-items: center; }
.ficons .ft { margin: 0 2px; }
.toggle { margin-left: auto; margin-right: -1px; width: 9px; height: 17px; border: 1px solid #2b2b2b; background: linear-gradient(#888, #666 50%, #333 50%); }
.mode { width: 187px; }
.lbl { margin-left: auto; margin-right: 6px; margin-top: -2px; }
.num { width: 54px; height: 19px; background: #383838; border: 1px solid #2b2b2b; display: flex; justify-content: space-between; padding-left: 5px; line-height: 17px; margin-right: -1px; }
.num i { width: 18px; background: linear-gradient(#707070, #5d5d5d); padding: 7px 0 0 6px; }
.lock { height: 30px; padding-left: 6px; }
.lock .num { margin-top: -1px; }
.lock .lbl { margin-top: -3px; }
.lbl2 { width: 61px; }
.k2 { margin-left: 8px; } .k3 { margin-left: 7px; } .k4 { margin-left: 9px; }
.lbody { display: flex; height: 292px; border-bottom: 1px solid #353535; }
.llist { width: 325px; overflow: hidden; }
.layer { display: flex; height: 63px; border-bottom: 1px solid #353535; font-size: 10.5px; letter-spacing: -.2px; }
.eye { width: 31px; border-right: 1px solid #383838; display: flex; align-items: center; justify-content: center; }
.thumb { width: 38px; padding: 1px 0 0 1px; }
.thumb i { width: 31px; height: 56px; margin: 2px 0 0 2px; border: 1px solid #000; background: repeating-conic-gradient(#ccc 0 25%, #fff 0 50%) 0 0 / 8px 8px; }
.lname { flex: 1; padding-left: 7px; line-height: 64px; color: #fff; }
.lname.px { padding-left: 6px; }
.cur .thumb, .cur .lname { background: #596678; }
.lscroll { width: 15px; background: #3b3b3b; display: flex; flex-direction: column; align-items: center; padding: 6px 0 5px; }
.lscroll i { width: 13px; height: 59px; margin: 8px 0 auto; border-radius: 3px; background: linear-gradient(90deg, #828282, #666); }
.lfoot { height: 19px; display: flex; align-items: center; justify-content: space-between; padding: 0 28px 0 137px; border-top: 1px solid #686868; }
.fx { font: italic 15px/16px "Liberation Serif", serif; color: #ccc; }
.fx sub { font-size: 10px; }

/* taskbar */
.taskbar { height: 40px; flex: none; display: flex; background: linear-gradient(90deg, #8499ae 0, #8ca2b9 300px, #8399ae 440px, #8da5bd 475px, #abc9e6 495px, #adcbea 1000px, #b5d2ee 1150px, #8198b0 1205px, #8da5bd 1270px, #8097ad); box-shadow: inset 0 1px #cfe2f5; }
.orb { margin: 1px 0 0 7px; }
.quick { display: flex; gap: 7px; margin: 7px 0 0 14px; }
.apps { display: flex; gap: 2px; margin-left: 343px; }
.app { width: 60px; height: 40px; display: flex; align-items: center; justify-content: center; }
.app.open { border: 1px solid #53687e; border-radius: 3px; box-shadow: inset 0 0 0 1px #e2eefa; background: linear-gradient(135deg, #dce8f4, #bdd3ea 45%, #b1cae5 46%, #bcd4ed); }
.app.bright { background: linear-gradient(135deg, #f4f8fc, #d6e3f1); }
.psicon { width: 29px; height: 27px; border: 2px solid #7dbcf2; background: #21145f; color: #93cdfa; font: bold 15px/22px "Open Sans", sans-serif; text-align: center; box-shadow: 0 1px 2px #555; }
.tray { display: flex; gap: 8px; margin: 13px 0 0 226px; }
.tray .up { margin: 6px 5px 0 0; }
.clock { width: 90px; margin-left: 3px; padding-top: 4px; display: flex; flex-direction: column; text-align: center; font: 12px/17px "Open Sans", sans-serif; letter-spacing: -.6px; color: #fff; }
.peek { width: 14px; height: 40px; margin-left: auto; border: 1px solid #5c7186; box-shadow: inset 0 0 0 1px #a9bccf; background: linear-gradient(160deg, #a9bdd0 50%, #7f97b0 50%); }
```
